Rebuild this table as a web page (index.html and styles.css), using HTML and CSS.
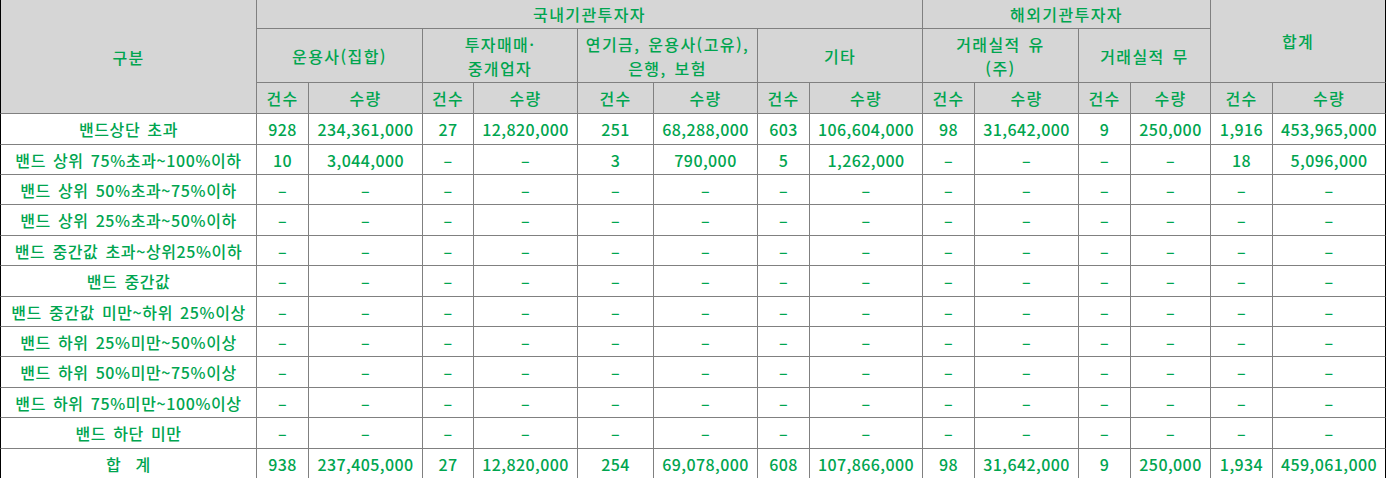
FILE: index.html
```html
<!DOCTYPE html>
<html lang="ko">
<head>
<meta charset="utf-8">
<title>밴드별 수요예측 참여내역</title>
<link rel="stylesheet" href="styles.css">
</head>
<body>
<div class="grid">
  <div class="c h first top col-label">구분</div>
  <div class="c h top col-dom">국내기관투자자</div>
  <div class="c h top col-for">해외기관투자자</div>
  <div class="c h top last col-sum">합계</div>

  <div class="c h span2">운용사(집합)</div>
  <div class="c h span2">투자매매·<br>중개업자</div>
  <div class="c h span2">연기금, 운용사(고유),<br>은행, 보험</div>
  <div class="c h span2">기타</div>
  <div class="c h span2">거래실적 유<br>(주)</div>
  <div class="c h span2">거래실적 무</div>

  <div class="c h">건수</div><div class="c h">수량</div>
  <div class="c h">건수</div><div class="c h">수량</div>
  <div class="c h">건수</div><div class="c h">수량</div>
  <div class="c h">건수</div><div class="c h">수량</div>
  <div class="c h">건수</div><div class="c h">수량</div>
  <div class="c h">건수</div><div class="c h">수량</div>
  <div class="c h">건수</div><div class="c h last">수량</div>

  <div class="c first lbl">밴드상단 초과</div>
  <div class="c n">928</div><div class="c n">234,361,000</div>
  <div class="c n">27</div><div class="c n">12,820,000</div>
  <div class="c n">251</div><div class="c n">68,288,000</div>
  <div class="c n">603</div><div class="c n">106,604,000</div>
  <div class="c n">98</div><div class="c n">31,642,000</div>
  <div class="c n">9</div><div class="c n">250,000</div>
  <div class="c n">1,916</div><div class="c n last">453,965,000</div>

  <div class="c first lbl">밴드 상위 75%초과~100%이하</div>
  <div class="c n">10</div><div class="c n">3,044,000</div>
  <div class="c n">–</div><div class="c n">–</div>
  <div class="c n">3</div><div class="c n">790,000</div>
  <div class="c n">5</div><div class="c n">1,262,000</div>
  <div class="c n">–</div><div class="c n">–</div>
  <div class="c n">–</div><div class="c n">–</div>
  <div class="c n">18</div><div class="c n last">5,096,000</div>

  <div class="c first lbl">밴드 상위 50%초과~75%이하</div>
  <div class="c n">–</div><div class="c n">–</div><div class="c n">–</div><div class="c n">–</div>
  <div class="c n">–</div><div class="c n">–</div><div class="c n">–</div><div class="c n">–</div>
  <div class="c n">–</div><div class="c n">–</div><div class="c n">–</div><div class="c n">–</div>
  <div class="c n">–</div><div class="c n last">–</div>

  <div class="c first lbl">밴드 상위 25%초과~50%이하</div>
  <div class="c n">–</div><div class="c n">–</div><div class="c n">–</div><div class="c n">–</div>
  <div class="c n">–</div><div class="c n">–</div><div class="c n">–</div><div class="c n">–</div>
  <div class="c n">–</div><div class="c n">–</div><div class="c n">–</div><div class="c n">–</div>
  <div class="c n">–</div><div class="c n last">–</div>

  <div class="c first lbl">밴드 중간값 초과~상위25%이하</div>
  <div class="c n">–</div><div class="c n">–</div><div class="c n">–</div><div class="c n">–</div>
  <div class="c n">–</div><div class="c n">–</div><div class="c n">–</div><div class="c n">–</div>
  <div class="c n">–</div><div class="c n">–</div><div class="c n">–</div><div class="c n">–</div>
  <div class="c n">–</div><div class="c n last">–</div>

  <div class="c first lbl">밴드 중간값</div>
  <div class="c n">–</div><div class="c n">–</div><div class="c n">–</div><div class="c n">–</div>
  <div class="c n">–</div><div class="c n">–</div><div class="c n">–</div><div class="c n">–</div>
  <div class="c n">–</div><div class="c n">–</div><div class="c n">–</div><div class="c n">–</div>
  <div class="c n">–</div><div class="c n last">–</div>

  <div class="c first lbl">밴드 중간값 미만~하위 25%이상</div>
  <div class="c n">–</div><div class="c n">–</div><div class="c n">–</div><div class="c n">–</div>
  <div class="c n">–</div><div class="c n">–</div><div class="c n">–</div><div class="c n">–</div>
  <div class="c n">–</div><div class="c n">–</div><div class="c n">–</div><div class="c n">–</div>
  <div class="c n">–</div><div class="c n last">–</div>

  <div class="c first lbl">밴드 하위 25%미만~50%이상</div>
  <div class="c n">–</div><div class="c n">–</div><div class="c n">–</div><div class="c n">–</div>
  <div class="c n">–</div><div class="c n">–</div><div class="c n">–</div><div class="c n">–</div>
  <div class="c n">–</div><div class="c n">–</div><div class="c n">–</div><div class="c n">–</div>
  <div class="c n">–</div><div class="c n last">–</div>

  <div class="c first lbl">밴드 하위 50%미만~75%이상</div>
  <div class="c n">–</div><div class="c n">–</div><div class="c n">–</div><div class="c n">–</div>
  <div class="c n">–</div><div class="c n">–</div><div class="c n">–</div><div class="c n">–</div>
  <div class="c n">–</div><div class="c n">–</div><div class="c n">–</div><div class="c n">–</div>
  <div class="c n">–</div><div class="c n last">–</div>

  <div class="c first lbl">밴드 하위 75%미만~100%이상</div>
  <div class="c n">–</div><div class="c n">–</div><div class="c n">–</div><div class="c n">–</div>
  <div class="c n">–</div><div class="c n">–</div><div class="c n">–</div><div class="c n">–</div>
  <div class="c n">–</div><div class="c n">–</div><div class="c n">–</div><div class="c n">–</div>
  <div class="c n">–</div><div class="c n last">–</div>

  <div class="c first lbl">밴드 하단 미만</div>
  <div class="c n">–</div><div class="c n">–</div><div class="c n">–</div><div class="c n">–</div>
  <div class="c n">–</div><div class="c n">–</div><div class="c n">–</div><div class="c n">–</div>
  <div class="c n">–</div><div class="c n">–</div><div class="c n">–</div><div class="c n">–</div>
  <div class="c n">–</div><div class="c n last">–</div>

  <div class="c first lbl">합&nbsp;&nbsp;계</div>
  <div class="c n">938</div><div class="c n">237,405,000</div>
  <div class="c n">27</div><div class="c n">12,820,000</div>
  <div class="c n">254</div><div class="c n">69,078,000</div>
  <div class="c n">608</div><div class="c n">107,866,000</div>
  <div class="c n">98</div><div class="c n">31,642,000</div>
  <div class="c n">9</div><div class="c n">250,000</div>
  <div class="c n">1,934</div><div class="c n last">459,061,000</div>
</div>
</body>
</html>
```

FILE: styles.css
```css
html, body {
  margin: 0;
  padding: 0;
  background: #ffffff;
}

.grid {
  display: grid;
  width: 1386px;
  grid-template-columns: 256px 52px 114px 51px 104px 76px 104px 52px 113px 52px 104px 52px 80px 62px 114px;
  grid-template-rows: 28px 54px 31px 31px 30px 30px 31px 30px 31px 30px 30px 31px 30px 31px 30px;
  font-family: "Noto Sans CJK KR", "DejaVu Sans", sans-serif;
  font-size: 16px;
  font-weight: 500;
  line-height: 24px;
  letter-spacing: 1.4px;
  word-spacing: 2px;
  color: #00a54f;
}

.c {
  box-sizing: border-box;
  display: flex;
  align-items: center;
  justify-content: center;
  text-align: center;
  border-left: 1px solid #808080;
  border-top: 1px solid #808080;
  white-space: nowrap;
  overflow: hidden;
}

.h {
  background: #d6d6d6;
}

.top {
  border-top: 0;
}

.first {
  border-left: 1px solid #000000;
}

.last {
  border-right: 1px solid #000000;
}

.lbl {
  letter-spacing: 0.6px;
  word-spacing: 2px;
}

.n {
  letter-spacing: 0.4px;
  word-spacing: 0;
}

.col-label {
  grid-column: 1 / 2;
  grid-row: 1 / 4;
}

.col-dom {
  grid-column: 2 / 10;
  grid-row: 1 / 2;
}

.col-for {
  grid-column: 10 / 14;
  grid-row: 1 / 2;
}

.col-sum {
  grid-column: 14 / 16;
  grid-row: 1 / 3;
}

.span2 {
  grid-column: span 2;
}
```
